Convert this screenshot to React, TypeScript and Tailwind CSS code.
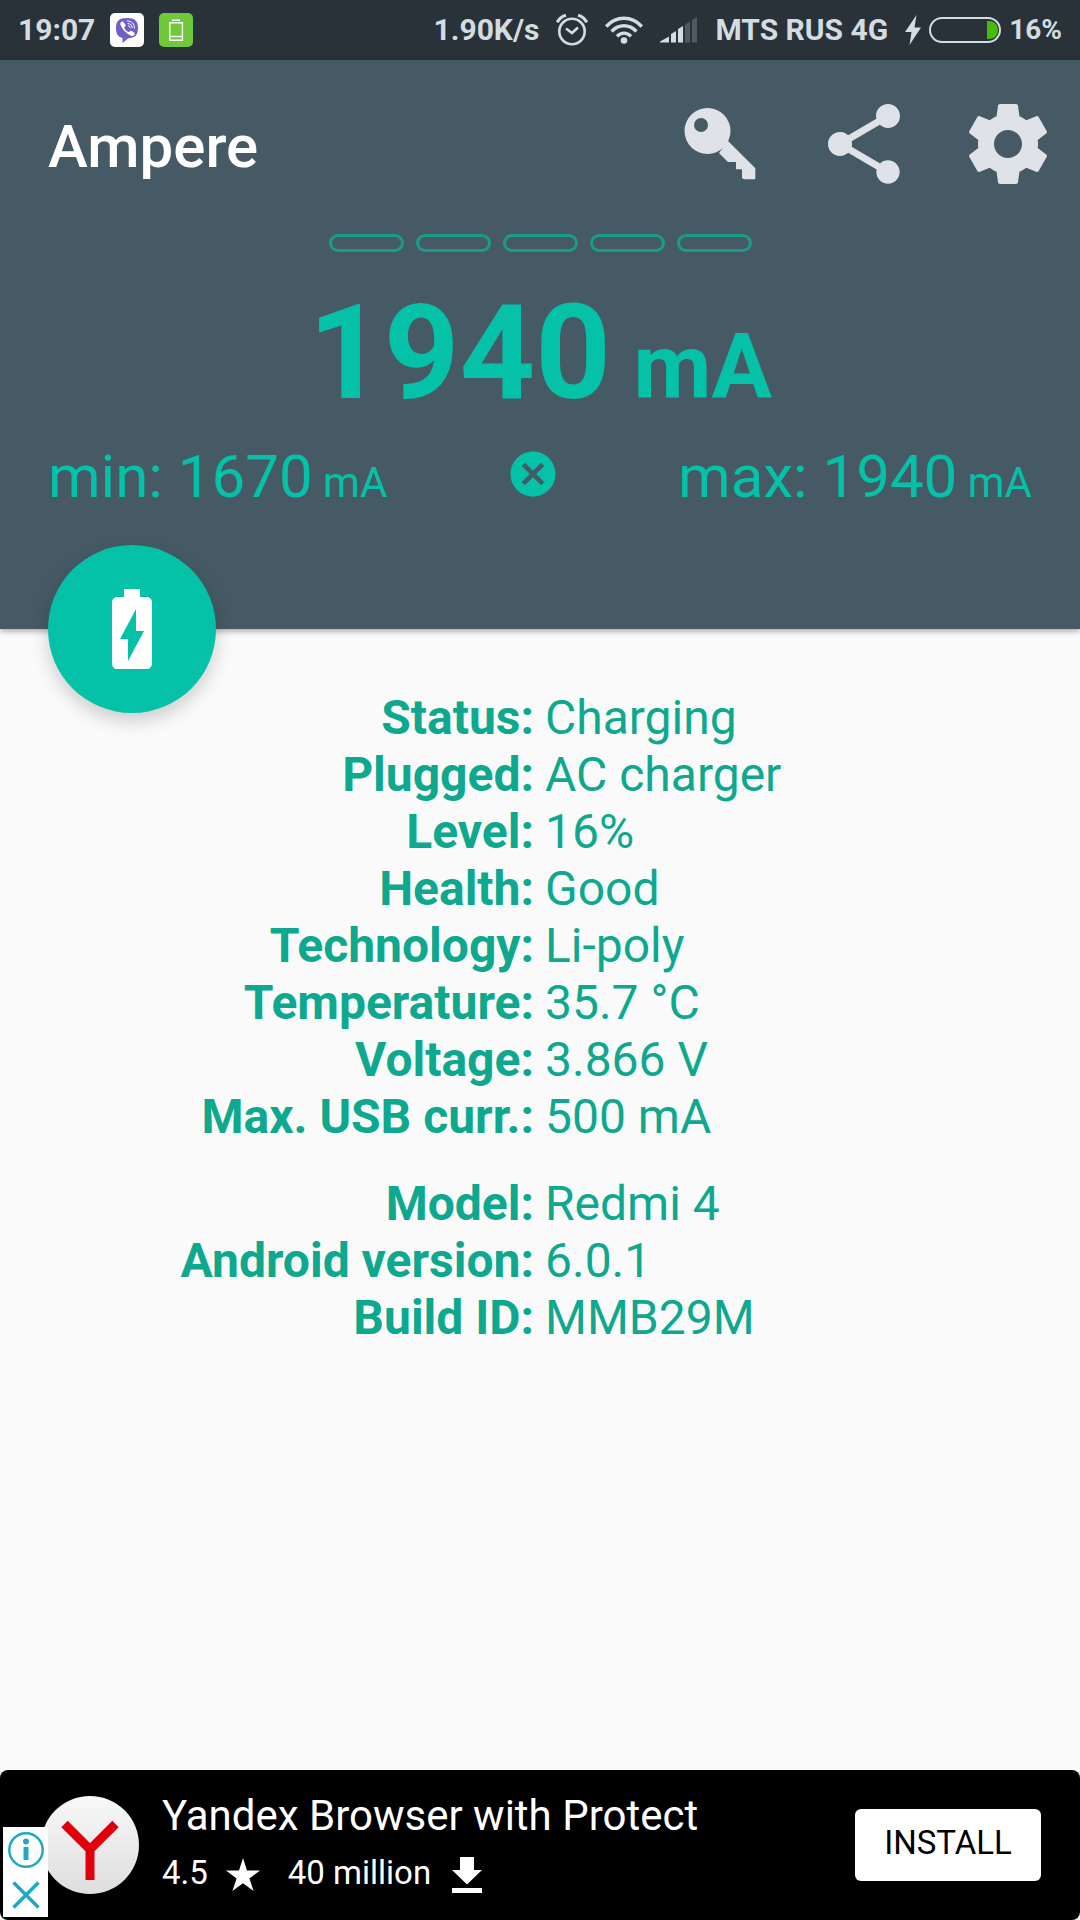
import { MdBatteryChargingFull, MdCancel, MdShare } from 'react-icons/md';

const batteryInfo = [
  { label: 'Status', value: 'Charging' },
  { label: 'Plugged', value: 'AC charger' },
  { label: 'Level', value: '16%' },
  { label: 'Health', value: 'Good' },
  { label: 'Technology', value: 'Li-poly' },
  { label: 'Temperature', value: '35.7 °C' },
  { label: 'Voltage', value: '3.866 V' },
  { label: 'Max. USB curr.', value: '500 mA' },
];

const deviceInfo = [
  { label: 'Model', value: 'Redmi 4' },
  { label: 'Android version', value: '6.0.1' },
  { label: 'Build ID', value: 'MMB29M' },
];

function ViberIcon() {
  return (
    <svg viewBox="0 0 34 34" className="w-[34px] h-[34px]">
      <rect width="34" height="34" rx="5" fill="#fff" />
      <path d="M17 5c8 0 11 3 11 10s-3 10-10 10.400L12.500 30v-5C8 23.800 6 21 6 15 6 8 9 5 17 5z" fill="#6f5fc6" />
      <path
        d="M11.500 8.800c1-.6 1.800-.2 2.400.7l1.500 2.200c.5.900.1 1.500-.7 2-.7.500-.6 1.100-.2 1.900.8 1.500 1.900 2.500 3.400 3.200.7.300 1.200.2 1.700-.4.600-.8 1.200-1 2-.5l2.400 1.700c.8.600.9 1.300.4 2.100-1 1.400-2 1.700-3.400 1-5-2.300-8.500-5.800-10.500-10.600-.5-1.300-.3-2.500 1-3.300z"
        fill="#fff"
      />
      <path d="M17.500 8c4.300.2 6.800 2.700 7 7M18 10.500c2.600.2 4 1.700 4.200 4.300M18.500 12.800c.9.100 1.400.6 1.500 1.600" fill="none" stroke="#fff" strokeWidth="1" strokeLinecap="round" />
    </svg>
  );
}

function AmpereIcon() {
  return (
    <svg viewBox="0 0 34 34" className="w-[34px] h-[34px]">
      <rect width="34" height="34" rx="5" fill="#6fc93a" />
      <path d="M13 6.500h8v1.500h-8z" fill="#fff" />
      <path d="M10.800 9.800h12.600v17.400H10.800zM10.800 23.500h12.600" fill="none" stroke="#fff" strokeWidth="1.400" />
    </svg>
  );
}

function AlarmIcon() {
  return (
    <svg viewBox="0 0 32 32" className="w-8 h-8" fill="none" stroke="#d3dce1" strokeWidth="2.600">
      <circle cx="16" cy="17.500" r="12.700" />
      <path d="M10 14.500l6 4.500 6-5.500" />
      <path d="M1.300 8.300C3 4.800 6 2.200 10 1.300M30.700 8.300C29 4.800 26 2.200 22 1.300" strokeWidth="3" />
    </svg>
  );
}

function WifiIcon() {
  return (
    <svg viewBox="0 0 38 28" className="w-[38px] h-7" fill="none" stroke="#d3dce1" strokeWidth="3.400">
      <path d="M1.200 10.500C11 -.5 27 -.5 36.800 10.500" />
      <path d="M6.600 15.500c7-7.600 17.800-7.600 24.800 0" />
      <path d="M12 20.300c4-4.300 10-4.300 14 0" />
      <circle cx="19" cy="24.500" r="3.300" fill="#d3dce1" stroke="none" />
    </svg>
  );
}

function SignalIcon() {
  return (
    <svg viewBox="0 0 38 26" className="w-[38px] h-[26px]">
      <path d="M0 25.500v-1l9-5v6zM11 25.500v-8.500l5-3v11.500zM18 25.500V12l5-3v16.500z" fill="#d3dce1" />
      <path d="M25 25.500V7.500l5-3v21zM32 25.500V3l5-3v25.500z" fill="#4d5a62" />
    </svg>
  );
}

function BoltIcon() {
  return (
    <svg viewBox="0 0 16 30" className="w-4 h-[30px]" fill="#d3dce1">
      <path d="M11.500 0L0 17h6.500L4.500 30 16 12.500H9.500z" />
    </svg>
  );
}

function PillBattery() {
  return (
    <svg viewBox="0 0 72 26" className="w-[72px] h-[26px]">
      <rect x="1" y="1" width="70" height="24" rx="12" fill="none" stroke="#d3dce1" strokeWidth="2" />
      <path d="M58 4h2c5.500 0 9 4 9 9s-3.500 9-9 9h-2z" fill="#46bd05" />
    </svg>
  );
}

function KeyIcon() {
  return (
    <svg viewBox="0 0 96 96" className="w-24 h-24" fill="currentColor">
      <circle cx="35.500" cy="35" r="23" />
      <path d="M56 45L83.300 72.300v11H72L70 82V73.300h-6V66h-8l-9-9z" />
      <circle cx="29" cy="29" r="7" fill="#455a64" />
    </svg>
  );
}

function GearIcon() {
  return (
    <svg viewBox="0 0 24 24" className="w-24 h-24" fill="currentColor">
      <path d="M19.430 12.980c.04-.32.07-.64.07-.98s-.03-.66-.07-.98l2.110-1.650c.19-.15.24-.42.12-.64l-2-3.460c-.12-.22-.39-.3-.61-.22l-2.490 1c-.52-.4-1.080-.73-1.690-.98l-.38-2.650C14.460 2.180 14.250 2 14 2h-4c-.25 0-.46.18-.49.42l-.38 2.650c-.61.25-1.170.59-1.690.98l-2.490-1c-.23-.09-.49 0-.61.22l-2 3.460c-.13.22-.07.49.12.64l2.110 1.650c-.04.32-.07.65-.07.98s.03.66.07.98l-2.110 1.650c-.19.15-.24.42-.12.64l2 3.460c.12.22.39.3.61.22l2.490-1c.52.4 1.080.73 1.690.98l.38 2.650c.03.24.24.42.49.42h4c.25 0 .46-.18.49-.42l.38-2.650c.61-.25 1.170-.59 1.690-.98l2.490 1c.23.09.49 0 .61-.22l2-3.460c.12-.22.07-.49-.12-.64l-2.110-1.650zM12 15.500c-1.930 0-3.500-1.570-3.500-3.500s1.570-3.500 3.500-3.500 3.500 1.570 3.500 3.500-1.570 3.500-3.500 3.500z" />
    </svg>
  );
}

function StatusBar() {
  return (
    <div className="h-[60px] bg-[#293239] text-[#d3dce1] text-[30px] font-bold leading-none flex items-center justify-between px-[18px]">
      <div className="flex items-center gap-[15px]">
        <span>19:07</span>
        <ViberIcon />
        <AmpereIcon />
      </div>
      <div className="flex items-center gap-[17px]">
        <span>1.90K/s</span>
        <AlarmIcon />
        <WifiIcon />
        <SignalIcon />
        <span>MTS RUS 4G</span>
        <div className="flex items-center gap-2">
          <BoltIcon />
          <PillBattery />
          <span className="text-[28px]">16%</span>
        </div>
      </div>
    </div>
  );
}

function InfoRows({ rows }: { rows: { label: string; value: string }[] }) {
  return (
    <tbody>
      {rows.map((row) => (
        <tr key={row.label}>
          <th scope="row" className="w-1/2 p-0 pr-[6px] text-right font-bold">
            {row.label}:
          </th>
          <td className="p-0 pl-[5px]">{row.value}</td>
        </tr>
      ))}
    </tbody>
  );
}

function AdBanner() {
  return (
    <footer className="relative h-[150px] bg-black text-white rounded-lg flex items-center pl-[41px] pr-[39px]">
      <svg viewBox="0 0 98 98" className="w-[98px] h-[98px] shrink-0">
        <defs>
          <linearGradient id="disc" x1="0" y1="0" x2="0" y2="1">
            <stop offset="0" stopColor="#f8f8f8" />
            <stop offset="1" stopColor="#dedede" />
          </linearGradient>
        </defs>
        <circle cx="49" cy="49" r="49" fill="url(#disc)" />
        <path d="M23.500 28L49 53.500 74.500 28M49 50v34" fill="none" stroke="#e0000b" strokeWidth="9" />
      </svg>

      <div className="flex-1 ml-[23px]">
        <p className="text-[42px] leading-[46px]">Yandex Browser with Protect</p>
        <div className="flex items-center mt-[10px] text-[33px] leading-[48px]">
          <span>4.5</span>
          <svg viewBox="0 0 34 34" className="w-[34px] h-[34px] ml-[18px] mr-7 mt-1" fill="#fff">
            <path d="M17 0l4 12.500h13l-10.600 8L27.600 33 17 25.300 6.400 33l4.200-12.500L0 12.500h13z" />
          </svg>
          <span>40 million</span>
          <svg viewBox="0 0 30 36" className="w-[30px] h-9 ml-[21px] mt-1" fill="#fff">
            <path d="M8 0h14v13h8L15 27.500 0 13h8zM0 31h30v5H0z" />
          </svg>
        </div>
      </div>

      <button className="h-[72px] w-[186px] bg-white text-black text-[33px] rounded-md pb-1">INSTALL</button>

      {/* AdChoices */}
      <div className="absolute left-[3px] bottom-[3px] w-[45px] h-[90px] bg-white flex flex-col">
        <button aria-label="Ad info" className="flex-1 flex items-center justify-center">
          <svg viewBox="0 0 36 36" className="w-9 h-9" fill="#1fa9c1">
            <circle cx="18" cy="18" r="16.700" fill="none" stroke="#1fa9c1" strokeWidth="2.500" />
            <circle cx="18" cy="9.500" r="3" />
            <path d="M15.500 15h5v13h-5z" />
          </svg>
        </button>
        <button aria-label="Close ad" className="flex-1 flex items-center justify-center">
          <svg viewBox="0 0 28 28" className="w-7 h-7" fill="none" stroke="#1fa9c1" strokeWidth="3.500">
            <path d="M1.500 1.500l25 25M26.500 1.500l-25 25" />
          </svg>
        </button>
      </div>
    </footer>
  );
}

export default function App() {
  return (
    <div className="min-h-screen flex flex-col bg-[#fafafa] font-[Roboto,sans-serif]">
      <StatusBar />

      <header className="relative bg-[#455a64] text-[#04c1a7] pb-[116px] shadow-[0_2px_6px_rgba(0,0,0,0.35)]">
        <div className="h-[168px] flex items-center justify-between pl-12">
          <h1 className="text-[60px] leading-[72px] font-medium text-white pt-[6px]">Ampere</h1>
          <div className="flex text-[#dfe3e7]">
            <button aria-label="Unlock" className="px-6">
              <KeyIcon />
            </button>
            <button aria-label="Share" className="px-6">
              <MdShare className="w-24 h-24" />
            </button>
            <button aria-label="Settings" className="px-6">
              <GearIcon />
            </button>
          </div>
        </div>

        {/* Level segments */}
        <div className="flex justify-center gap-3 mt-[6px]">
          {[1, 2, 3, 4, 5].map((n) => (
            <span key={n} className="w-[75px] h-[18px] rounded-full border-3 border-[#189d88]" />
          ))}
        </div>

        <p className="mt-[35px] text-center text-[132px] leading-[132px] font-bold">
          1940<span className="text-[90px] leading-none"> mA</span>
        </p>

        <div className="mt-[22px] px-12 flex items-center justify-between text-[60px] leading-[72px]">
          <p>
            min: 1670<span className="text-[42px] leading-none"> mA</span>
          </p>
          <button aria-label="Reset min and max" className="pb-[6px]">
            <MdCancel className="w-[54px] h-[54px]" />
          </button>
          <p>
            max: 1940<span className="text-[42px] leading-none"> mA</span>
          </p>
        </div>

        <button
          aria-label="Battery status"
          className="absolute left-12 -bottom-[84px] w-[168px] h-[168px] rounded-full bg-[#04c1a7] text-white flex items-center justify-center shadow-[0_8px_18px_rgba(0,0,0,0.18)]"
        >
          <MdBatteryChargingFull className="w-24 h-24" />
        </button>
      </header>

      <main className="flex-1 pt-[60px] text-[48px] leading-[57px] text-[#0da88d]">
        <table className="w-full table-fixed">
          <InfoRows rows={batteryInfo} />
        </table>
        <table className="w-full table-fixed mt-[30px]">
          <InfoRows rows={deviceInfo} />
        </table>
      </main>

      <AdBanner />
    </div>
  );
}
